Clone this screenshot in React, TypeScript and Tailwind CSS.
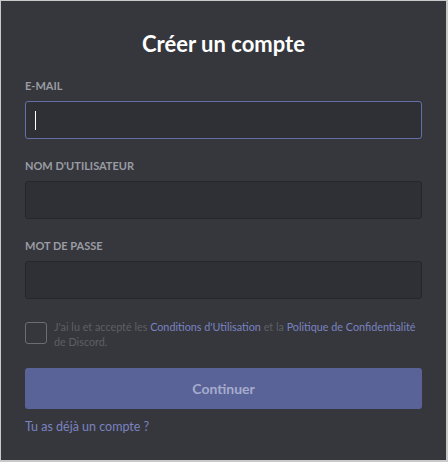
export default function App() {
  const labels = ['E-MAIL', "NOM D'UTILISATEUR", 'MOT DE PASSE'];

  return (
    <div
      className="w-[448px] h-[462px] border border-r-2 border-b-2 border-[#c9c9c9] bg-[#36373d] text-white"
      style={{ fontFamily: 'Lato, "Open Sans", sans-serif' }}
    >
      <div className="px-[24px] pt-[28px]">
        <h1 className="text-center text-[22px] font-bold leading-[30px] text-white">Créer un compte</h1>

        <div className="mt-[20px] flex flex-col gap-[20px]">
          {labels.map((label, i) => (
            <div key={label}>
              <div className="text-[11px] font-bold leading-[14px] text-[#9a9ca3]">{label}</div>
              <div
                className={
                  'mt-[8px] h-[38px] rounded-[3px] border bg-[#2f3035] flex items-center px-[9px] ' +
                  (i === 0 ? 'border-[#6670a8]' : 'border-[#25262a]')
                }
              >
                {i === 0 && <div className="w-px h-[19px] bg-white" />}
              </div>
            </div>
          ))}
        </div>

        <div className="mt-[20px] flex items-start gap-[7px]">
          <div className="mt-[3px] w-[22px] h-[22px] shrink-0 rounded-[3px] border border-[#6b6d72]" />
          <p className="text-[10.8px] leading-[15px] text-[#5d5f65]">
            J'ai lu et accepté les <span className="text-[#7a83c0]">Conditions d'Utilisation</span> et la{' '}
            <span className="text-[#7a83c0]">Politique de Confidentialité</span> de Discord.
          </p>
        </div>

        <button className="mt-[19px] w-full h-[41px] rounded-[3px] bg-[#5a6397] text-[14px] font-bold text-[#a6acce]">
          Continuer
        </button>

        <div className="mt-[9px] text-[12.5px] text-[#7a83c0]">Tu as déjà un compte ?</div>
      </div>
    </div>
  );
}
